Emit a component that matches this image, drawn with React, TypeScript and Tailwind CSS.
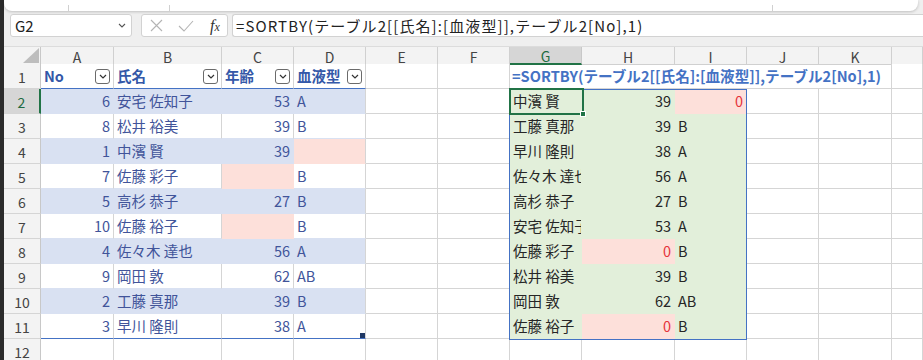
import clsx from 'clsx'

const GRID =
  'grid grid-cols-[37px_73px_108px_72px_72px_72px_72px_72px_93px_72px_72px_73px_1fr]'

type Row = [number, string, number | null, string | null]

const table: Row[] = [
  [6, '安宅 佐知子', 53, 'A'],
  [8, '松井 裕美', 39, 'B'],
  [1, '中濱 賢', 39, null],
  [7, '佐藤 彩子', null, 'B'],
  [5, '高杉 恭子', 27, 'B'],
  [10, '佐藤 裕子', null, 'B'],
  [4, '佐々木 達也', 56, 'A'],
  [9, '岡田 敦', 62, 'AB'],
  [2, '工藤 真那', 39, 'B'],
  [3, '早川 隆則', 38, 'A'],
]

const spill = [...table].sort((a, b) => a[0] - b[0])

// fill colours for a cell: bg + right/bottom borders painted in the same colour
const fills: Record<string, string> = {
  band: 'bg-[#d9e1f2] border-r-[#d9e1f2] border-b-[#d9e1f2]',
  pink: 'bg-[#fde0da] border-r-[#fde0da] border-b-[#fde0da]',
  green: 'bg-[#e2efda] border-r-[#e2efda] border-b-[#e2efda]',
  none: 'bg-white border-r-[#d5d5d5] border-b-[#d5d5d5]',
}

function Cell({
  children,
  fill = 'none',
  right,
  className,
}: {
  children?: React.ReactNode
  fill?: keyof typeof fills
  right?: boolean
  className?: string
}) {
  return (
    <div
      className={clsx(
        'relative flex h-full items-center overflow-hidden whitespace-nowrap border-r border-b px-[3px] pt-[1px] leading-none',
        fills[fill],
        right && 'justify-end',
        className,
      )}
    >
      {children}
    </div>
  )
}

function RowHead({ n, selected }: { n: number; selected?: boolean }) {
  return (
    <div
      className={clsx(
        'flex h-full items-center justify-center border-b border-b-[#d5d5d5] pt-[1px] text-[14px] leading-none',
        selected
          ? 'bg-[#d6d6d6] text-[#1e6b41] border-r-2 border-r-[#217346]'
          : 'bg-[#f3f3f3] text-[#444] border-r border-r-[#c8c8c8]',
      )}
    >
      {n}
    </div>
  )
}

function Dropdown() {
  return (
    <span className="flex h-[15px] w-[15px] shrink-0 items-center justify-center rounded-[3px] border border-[#6b6b6b] bg-white">
      <svg width="8" height="5" viewBox="0 0 8 5">
        <path d="M1 1 L4 4 L7 1" fill="none" stroke="#333" strokeWidth="1.2" />
      </svg>
    </span>
  )
}

function HeadCell({ label }: { label: string }) {
  return (
    <div className="flex h-full items-center justify-between border-r border-r-[#d5d5d5] border-b border-b-[#4472c4] bg-white pl-[3px] pr-[3px]">
      <span className="pt-[1px] text-[14.5px] font-bold leading-none text-[#3458a8]">{label}</span>
      <Dropdown />
    </div>
  )
}

const letters = ['A', 'B', 'C', 'D', 'E', 'F', 'G', 'H', 'I', 'J', 'K', '']

export default function App() {
  return (
    <div className="flex h-[360px] w-[923px] overflow-hidden bg-white font-['Noto_Sans_CJK_JP','Noto_Sans',sans-serif] text-[#222]">
      {/* window edge */}
      <div className="w-[4px] shrink-0 bg-[#2b2b2b]" />

      <div className="flex min-w-0 flex-1 flex-col">
        {/* ribbon + formula bar */}
        <div className="bg-[#efefef]">
          <div className="mr-[5px] flex h-[11px] items-end overflow-hidden rounded-b-lg bg-white shadow-[0_1px_3px_rgba(0,0,0,0.2)]">
            <div className="h-[6px] w-[65px] border-r border-[#d0d0d0]" />
            <div className="h-[6px] w-[101px] border-r border-[#d0d0d0]" />
            <div className="h-[6px] w-[603px] border-r border-[#d0d0d0]" />
          </div>
          <div className="flex h-[35px] pt-[3px] pb-[9px]">
            <div className="ml-[6px] flex w-[122px] items-center justify-between rounded-[3px] border border-[#d2d2d2] bg-white pl-[4px] pr-[5px] text-[15px] leading-none">
              <span>G2</span>
              <svg width="8" height="5" viewBox="0 0 8 5">
                <path d="M1 1 L4 4 L7 1" fill="none" stroke="#555" strokeWidth="1.1" />
              </svg>
            </div>
            <div className="ml-[9px] flex w-[87px] items-center rounded-[3px] border border-[#d2d2d2] bg-white pl-[8px]">
              <svg width="13" height="13" viewBox="0 0 13 13">
                <path d="M1 1 L12 12 M12 1 L1 12" stroke="#b4b4b4" strokeWidth="1.1" />
              </svg>
              <svg className="ml-[15px]" width="16" height="12" viewBox="0 0 16 12">
                <path d="M1 6 L6 11 L15 1" fill="none" stroke="#b4b4b4" strokeWidth="1.1" />
              </svg>
              <span className="ml-[16px] font-['Liberation_Serif',serif] text-[16px] italic leading-none text-[#333]">
                f<span className="text-[12px]">x</span>
              </span>
            </div>
            <div className="ml-[4px] flex flex-1 items-center rounded-l-[3px] border border-r-0 border-[#d2d2d2] bg-white pl-[3px] text-[15px] leading-none tracking-[1.1px]">
              =SORTBY(テーブル2[[氏名]:[血液型]],テーブル2[No],1)
            </div>
          </div>
        </div>

        {/* sheet */}
        <div className="relative">
          {/* column headers */}
          <div className={clsx(GRID, 'h-[18px] border-t border-[#dcdcdc] bg-[#f3f3f3]')}>
            <div className="flex h-full items-end justify-end border-r border-b border-[#c8c8c8] pr-[1px] pb-[1px]">
              <svg width="16" height="15" viewBox="0 0 16 15">
                <polygon points="16,0 16,15 0,15" fill="#bdbdbd" />
              </svg>
            </div>
            {letters.map((l, i) =>
              l === 'G' ? (
                <div
                  key={i}
                  className="flex h-full items-center justify-center border-r border-r-[#c8c8c8] border-b-2 border-b-[#217346] bg-[#d6d6d6] pt-[2px] text-[14px] leading-none text-[#1e6b41]"
                >
                  {l}
                </div>
              ) : (
                <div
                  key={i}
                  className="flex h-full items-center justify-center border-r border-b border-[#d0d0d0] pt-[2px] text-[14px] leading-none text-[#444]"
                >
                  {l}
                </div>
              ),
            )}
          </div>

          {/* row 1 */}
          <div className={clsx(GRID, 'h-[25px]')}>
            <RowHead n={1} />
            <HeadCell label="No" />
            <HeadCell label="氏名" />
            <HeadCell label="年齢" />
            <HeadCell label="血液型" />
            <Cell />
            <Cell />
            <div className="col-span-5 flex h-full items-center overflow-hidden whitespace-nowrap border-r border-b border-[#d5d5d5] pl-[2px] pt-[1px] text-[14.6px] font-bold leading-none text-[#4472c4]">
              =SORTBY(テーブル2[[氏名]:[血液型]],テーブル2[No],1)
            </div>
            <Cell />
          </div>

          {/* rows 2-11 */}
          {table.map((r, i) => {
            const banded = i % 2 === 0
            const last = i === table.length - 1
            const base = banded ? 'band' : 'none'
            const tbl = clsx(
              'text-[14.5px] text-[#41549a]',
              !banded && 'border-r-[#d5d5d5]',
              last && '!border-b-[#4472c4]',
              !last && !banded && 'border-b-[#d9e1f2]',
            )
            const s = spill[i]
            const sp = 'text-[14.5px] text-[#262626]'
            return (
              <div key={i} className={clsx(GRID, 'h-[25px]')}>
                <RowHead n={i + 2} selected={i === 0} />
                <Cell fill={base} right className={tbl}>
                  {r[0]}
                </Cell>
                <Cell fill={base} className={tbl}>
                  {r[1]}
                </Cell>
                <Cell
                  fill={r[2] === null ? 'pink' : base}
                  right
                  className={clsx(tbl, r[2] === null && !banded && '!border-r-[#fde0da]')}
                >
                  {r[2]}
                </Cell>
                <Cell fill={r[3] === null ? 'pink' : base} className={clsx(tbl, '!border-r-[#d5d5d5]')}>
                  {r[3]}
                  {last && <span className="absolute right-0 bottom-0 h-[5px] w-[5px] bg-[#1f3864]" />}
                </Cell>
                <Cell />
                <Cell />
                <Cell fill="green" className={sp}>
                  {s[1]}
                </Cell>
                <Cell
                  fill={s[2] === null ? 'pink' : 'green'}
                  right
                  className={clsx(sp, s[2] === null && 'text-[#e5333a]')}
                >
                  {s[2] ?? 0}
                </Cell>
                <Cell
                  fill={s[3] === null ? 'pink' : 'green'}
                  right={s[3] === null}
                  className={clsx(sp, s[3] === null && 'text-[#e5333a]')}
                >
                  {s[3] ?? 0}
                </Cell>
                <Cell />
                <Cell />
                <Cell />
              </div>
            )
          })}

          {/* row 12 */}
          <div className={clsx(GRID, 'h-[25px]')}>
            <RowHead n={12} />
            {letters.map((_, i) => (
              <Cell key={i} />
            ))}
          </div>

          {/* spill range border */}
          <div className="pointer-events-none absolute top-[43px] left-[505px] h-[251px] w-[238px] border border-[#4472c4]" />
          {/* active cell G2 */}
          <div className="pointer-events-none absolute top-[42px] left-[505px] h-[27px] w-[75px] border-2 border-[#217346]">
            <span className="absolute -right-[4px] -bottom-[4px] h-[6px] w-[6px] border border-white bg-[#217346]" />
          </div>
        </div>
      </div>
    </div>
  )
}
